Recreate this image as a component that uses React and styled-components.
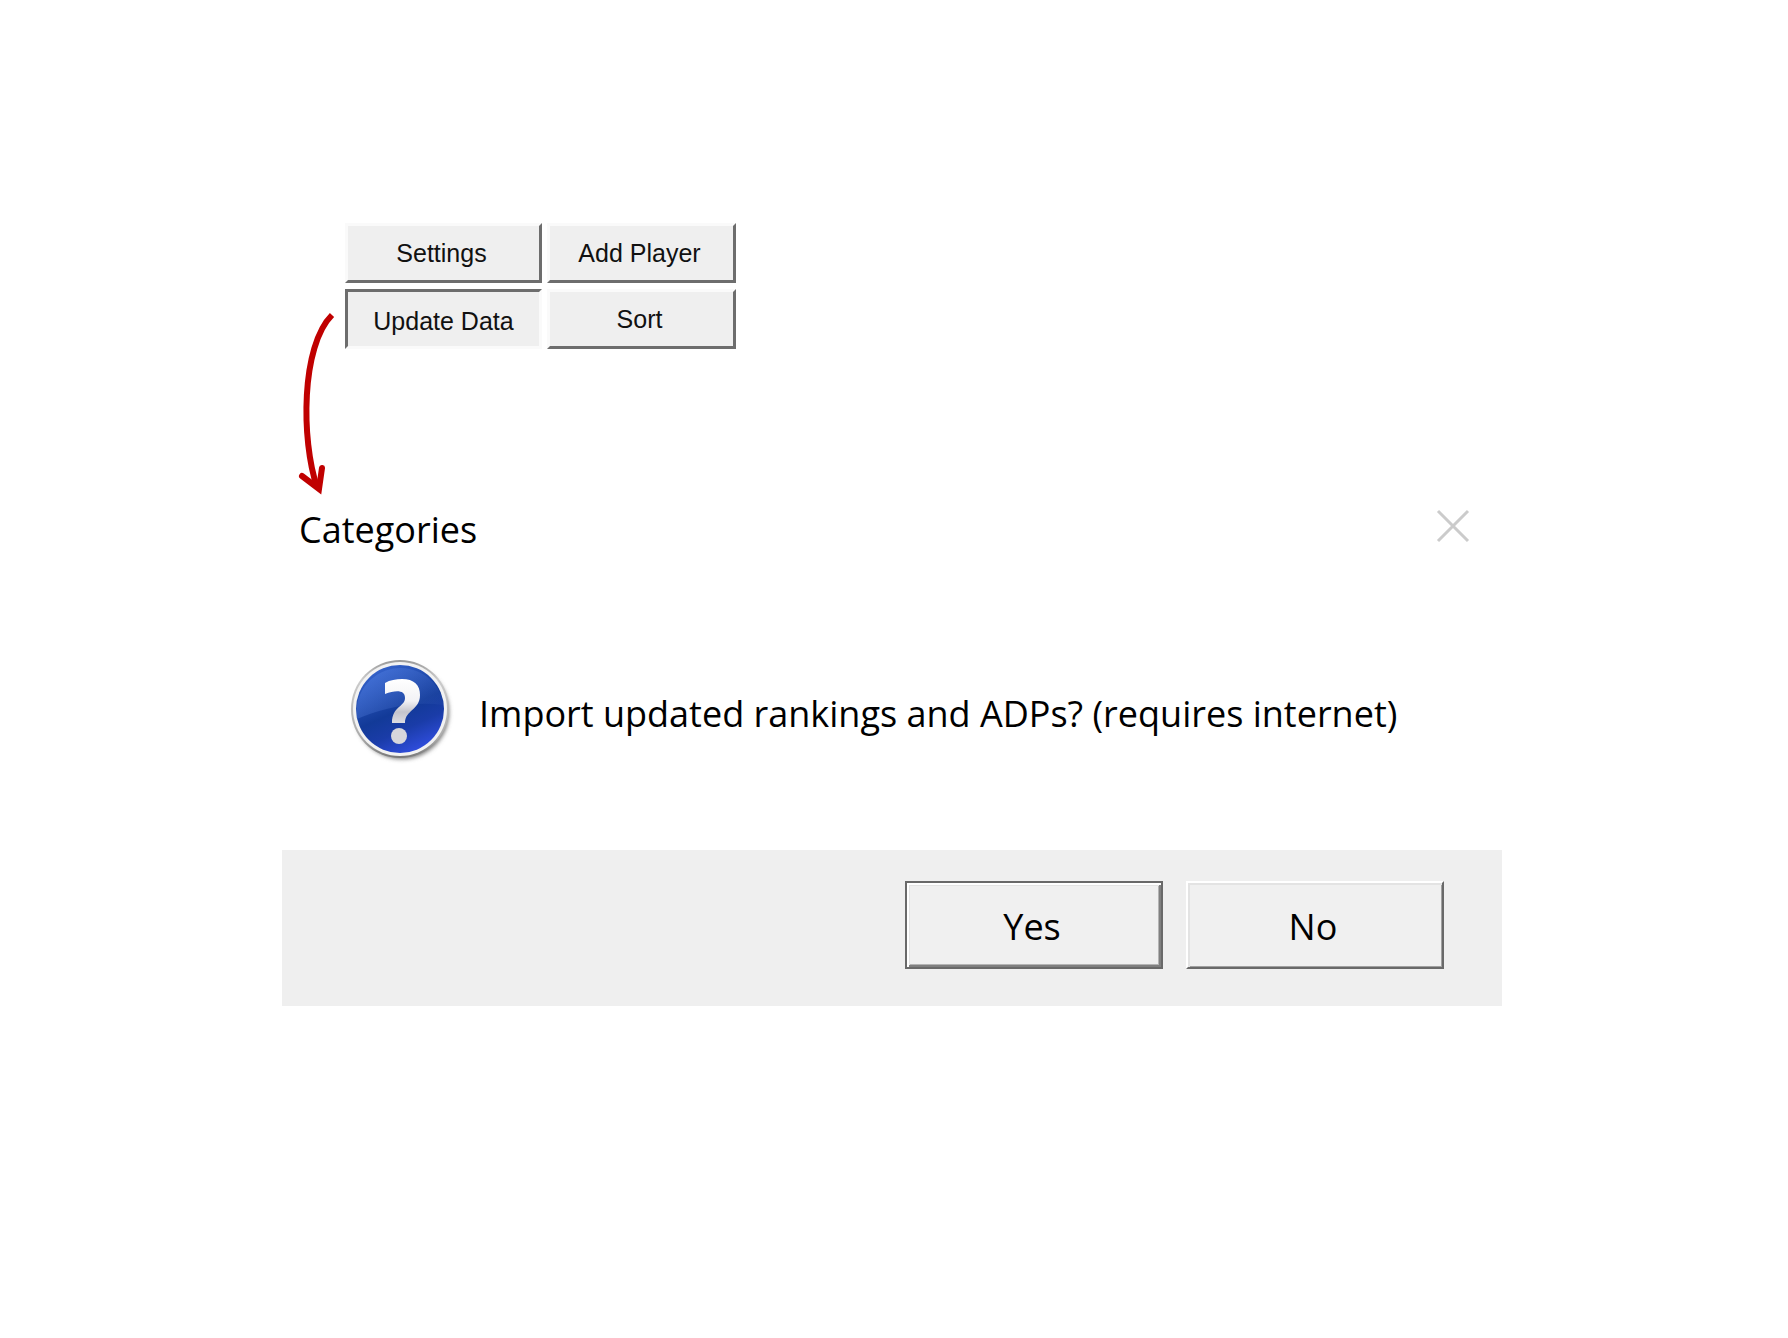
/**
 *
 * Update Data prompt
 *
 */

import React from 'react';
import styled, { createGlobalStyle, css } from 'styled-components';

const GlobalStyle = createGlobalStyle`
  * {
    box-sizing: border-box;
  }
  body {
    margin: 0;
    background: #fff;
    color: #000;
    font-family: 'Open Sans', 'Noto Sans', sans-serif;
  }
`;

const Page = styled.main`
  padding: 223px 286px 64px 282px;
`;

const Toolbar = styled.section`
  display: flex;
  align-items: flex-start;
  gap: 5px;
  padding-left: 16px;
`;

const Arrow = styled.svg`
  flex: none;
  width: 42px;
  height: 184px;
  margin-top: 89px;
`;

const ButtonGrid = styled.div`
  display: grid;
  grid-template-columns: 197px 189px;
  grid-auto-rows: 60px;
  gap: 6px 5px;
`;

const pressed = css`
  border-color: #6d6d6d #fafafa #fafafa #6d6d6d;
  padding: 3px 0 0;
`;

const ToolButton = styled.button`
  border: 3px solid;
  border-color: #fafafa #6d6d6d #6d6d6d #fafafa;
  padding: 0 4px 0 0;
  background: #efefef;
  color: #111;
  font-family: 'Liberation Sans', Arial, sans-serif;
  font-size: 25px;
  line-height: 28px;
  ${props => props.$pressed && pressed}
`;

const Dialog = styled.section`
  display: flex;
  flex-direction: column;
`;

const TitleBar = styled.header`
  display: flex;
  align-items: flex-start;
  justify-content: space-between;
  padding: 8px 27px 0 17px;
  h1 {
    margin: 0;
    font-size: 36px;
    font-weight: 400;
    line-height: 52px;
  }
`;

const CloseButton = styled.button`
  display: flex;
  border: 0;
  padding: 5px;
  background: none;
  svg {
    width: 34px;
    height: 34px;
  }
`;

const Body = styled.div`
  display: flex;
  align-items: center;
  gap: 23px;
  padding: 100px 64px 86px 66px;
  p {
    margin: 0;
    padding-top: 8px;
    font-size: 36px;
    line-height: 52px;
  }
`;

const QuestionIcon = styled.svg`
  flex: none;
  width: 108px;
  height: 108px;
`;

const Footer = styled.footer`
  display: flex;
  justify-content: flex-end;
  gap: 23px;
  padding: 31px 58px 37px;
  background: #efefef;
`;

const DialogButton = styled.button`
  width: 258px;
  height: 88px;
  border: 2px solid;
  border-color: #fff #696969 #696969 #fff;
  padding: 4px 4px 0 0;
  background: #f0f0f0;
  color: #000;
  font-family: inherit;
  font-size: 36px;
  line-height: 52px;
  box-shadow: inset 2px 2px #e3e3e3, inset -1px -1px #a0a0a0;
  ${props =>
    props.$primary &&
    css`
      border-color: #696969;
      box-shadow: inset 2px 2px #fff, inset -2px -2px #808080,
        inset 3px 3px #e3e3e3, inset -3px -3px #b4b4b4;
    `}
`;

function App() {
  return (
    <Page>
      <GlobalStyle />
      <Toolbar>
        <Arrow viewBox="0 0 42 184" fill="none" aria-hidden="true">
          <path
            d="M34 3C3 34 3 128 19 175"
            stroke="#c00000"
            strokeWidth="6"
          />
          <path
            d="M4 164L21 177L24 156"
            stroke="#c00000"
            strokeWidth="6"
            strokeLinecap="round"
          />
        </Arrow>
        <ButtonGrid>
          <ToolButton type="button">Settings</ToolButton>
          <ToolButton type="button">Add Player</ToolButton>
          <ToolButton type="button" $pressed aria-pressed="true">
            Update Data
          </ToolButton>
          <ToolButton type="button">Sort</ToolButton>
        </ButtonGrid>
      </Toolbar>
      <Dialog role="dialog" aria-labelledby="dialog-title">
        <TitleBar>
          <h1 id="dialog-title">Categories</h1>
          <CloseButton type="button" aria-label="Close">
            <svg viewBox="0 0 34 34" fill="none">
              <path d="M2 2L32 32M32 2L2 32" stroke="#cbcbcb" strokeWidth="3" />
            </svg>
          </CloseButton>
        </TitleBar>
        <Body>
          <QuestionIcon viewBox="0 0 108 108" aria-hidden="true">
            <defs>
              <linearGradient id="rim" x1="0" y1="0" x2="0" y2="1">
                <stop offset="0" stopColor="#999" />
                <stop offset="0.2" stopColor="#ccc" />
                <stop offset="0.8" stopColor="#aaa" />
                <stop offset="1" stopColor="#777" />
              </linearGradient>
              <linearGradient id="disc" x1="0.3" y1="0" x2="0.75" y2="1">
                <stop offset="0" stopColor="#3563cc" />
                <stop offset="0.5" stopColor="#123a98" />
                <stop offset="0.7" stopColor="#1a3ca8" />
                <stop offset="1" stopColor="#3350e6" />
              </linearGradient>
              <linearGradient id="gloss" x1="0" y1="0" x2="1" y2="0.6">
                <stop offset="0" stopColor="#4f7fe6" stopOpacity="0.6" />
                <stop offset="1" stopColor="#4a70c8" stopOpacity="0.1" />
              </linearGradient>
              <linearGradient id="mark" x1="0" y1="0" x2="0" y2="1">
                <stop offset="0" stopColor="#fff" />
                <stop offset="0.5" stopColor="#f2f2f5" />
                <stop offset="0.75" stopColor="#c4c4cc" />
                <stop offset="1" stopColor="#dcdce2" />
              </linearGradient>
              <filter id="shadow" x="-10%" y="-10%" width="120%" height="120%">
                <feGaussianBlur stdDeviation="2" />
              </filter>
            </defs>
            <circle cx="54" cy="56" r="47" fill="#777" filter="url(#shadow)" />
            <circle cx="52" cy="53" r="49" fill="url(#rim)" />
            <circle cx="52" cy="53" r="47" fill="#f2f2f2" />
            <circle cx="52" cy="53" r="44" fill="url(#disc)" />
            <path
              d="M9 63A44 44 0 0 1 96 49C62 44 30 54 9 63Z"
              fill="url(#gloss)"
            />
            <path
              d="M37 27C42 24 48 23 54 23C66 23 72 29 72 39C72 54 57 54 57 67H44C44 50 57 51 57 42C57 34 48 34 37 38Z"
              fill="url(#mark)"
            />
            <circle cx="51" cy="80" r="8" fill="#d6d6dc" />
          </QuestionIcon>
          <p>Import updated rankings and ADPs? (requires internet)</p>
        </Body>
        <Footer>
          <DialogButton type="button" $primary>
            Yes
          </DialogButton>
          <DialogButton type="button">No</DialogButton>
        </Footer>
      </Dialog>
    </Page>
  );
}

export default App;
